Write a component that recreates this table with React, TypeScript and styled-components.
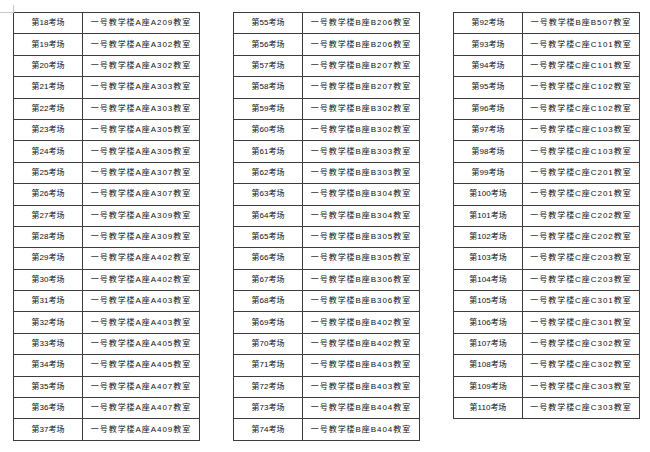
import styled, { createGlobalStyle } from "styled-components";

const GlobalStyle = createGlobalStyle`
  html, body {
    margin: 0;
    padding: 0;
    background: #ffffff;
  }
  body {
    font-family: "Liberation Sans", "Noto Sans CJK SC", sans-serif;
    color: #222;
  }
`;

const Page = styled.div`
  position: relative;
  width: 650px;
  height: 452px;
  padding: 12px 0 0 13px;
  box-sizing: border-box;
  display: flex;
  align-items: flex-start;
  gap: 33px;
  overflow: hidden;
`;

const CornerMark = styled.div`
  position: absolute;
  left: 0;
  top: 5px;
  width: 13px;
  height: 7px;
  border-right: 1px solid #c8c8c8;
  border-bottom: 1px solid #c8c8c8;
`;

const Table = styled.table`
  border-collapse: collapse;
  table-layout: fixed;
  width: 187px;
`;

const Cell = styled.td<{ $wide?: boolean }>`
  border: 1px solid #3c3c3c;
  height: 21.4px;
  padding: 0;
  box-sizing: border-box;
  width: ${(p) => (p.$wide ? "117px" : "69px")};
  text-align: center;
  vertical-align: middle;
  font-size: 8px;
  line-height: 1;
  letter-spacing: ${(p) => (p.$wide ? "0.95px" : "0")};
  white-space: nowrap;
  color: #111;
`;

type Row = [number, string];

const left: Row[] = [
  [18, "A座A209"],
  [19, "A座A302"],
  [20, "A座A302"],
  [21, "A座A303"],
  [22, "A座A303"],
  [23, "A座A305"],
  [24, "A座A305"],
  [25, "A座A307"],
  [26, "A座A307"],
  [27, "A座A309"],
  [28, "A座A309"],
  [29, "A座A402"],
  [30, "A座A402"],
  [31, "A座A403"],
  [32, "A座A403"],
  [33, "A座A405"],
  [34, "A座A405"],
  [35, "A座A407"],
  [36, "A座A407"],
  [37, "A座A409"],
];

const middle: Row[] = [
  [55, "B座B206"],
  [56, "B座B206"],
  [57, "B座B207"],
  [58, "B座B207"],
  [59, "B座B302"],
  [60, "B座B302"],
  [61, "B座B303"],
  [62, "B座B303"],
  [63, "B座B304"],
  [64, "B座B304"],
  [65, "B座B305"],
  [66, "B座B305"],
  [67, "B座B306"],
  [68, "B座B306"],
  [69, "B座B402"],
  [70, "B座B402"],
  [71, "B座B403"],
  [72, "B座B403"],
  [73, "B座B404"],
  [74, "B座B404"],
];

const right: Row[] = [
  [92, "B座B507"],
  [93, "C座C101"],
  [94, "C座C101"],
  [95, "C座C102"],
  [96, "C座C102"],
  [97, "C座C103"],
  [98, "C座C103"],
  [99, "C座C201"],
  [100, "C座C201"],
  [101, "C座C202"],
  [102, "C座C202"],
  [103, "C座C203"],
  [104, "C座C203"],
  [105, "C座C301"],
  [106, "C座C301"],
  [107, "C座C302"],
  [108, "C座C302"],
  [109, "C座C303"],
  [110, "C座C303"],
];

function RoomTable({ rows }: { rows: Row[] }) {
  return (
    <Table>
      <tbody>
        {rows.map(([no, room]) => (
          <tr key={no}>
            <Cell>第{no}考场</Cell>
            <Cell $wide>一号教学楼{room}教室</Cell>
          </tr>
        ))}
      </tbody>
    </Table>
  );
}

function App() {
  return (
    <>
      <GlobalStyle />
      <Page>
        <CornerMark />
        <RoomTable rows={left} />
        <RoomTable rows={middle} />
        <RoomTable rows={right} />
      </Page>
    </>
  );
}

export default App;
